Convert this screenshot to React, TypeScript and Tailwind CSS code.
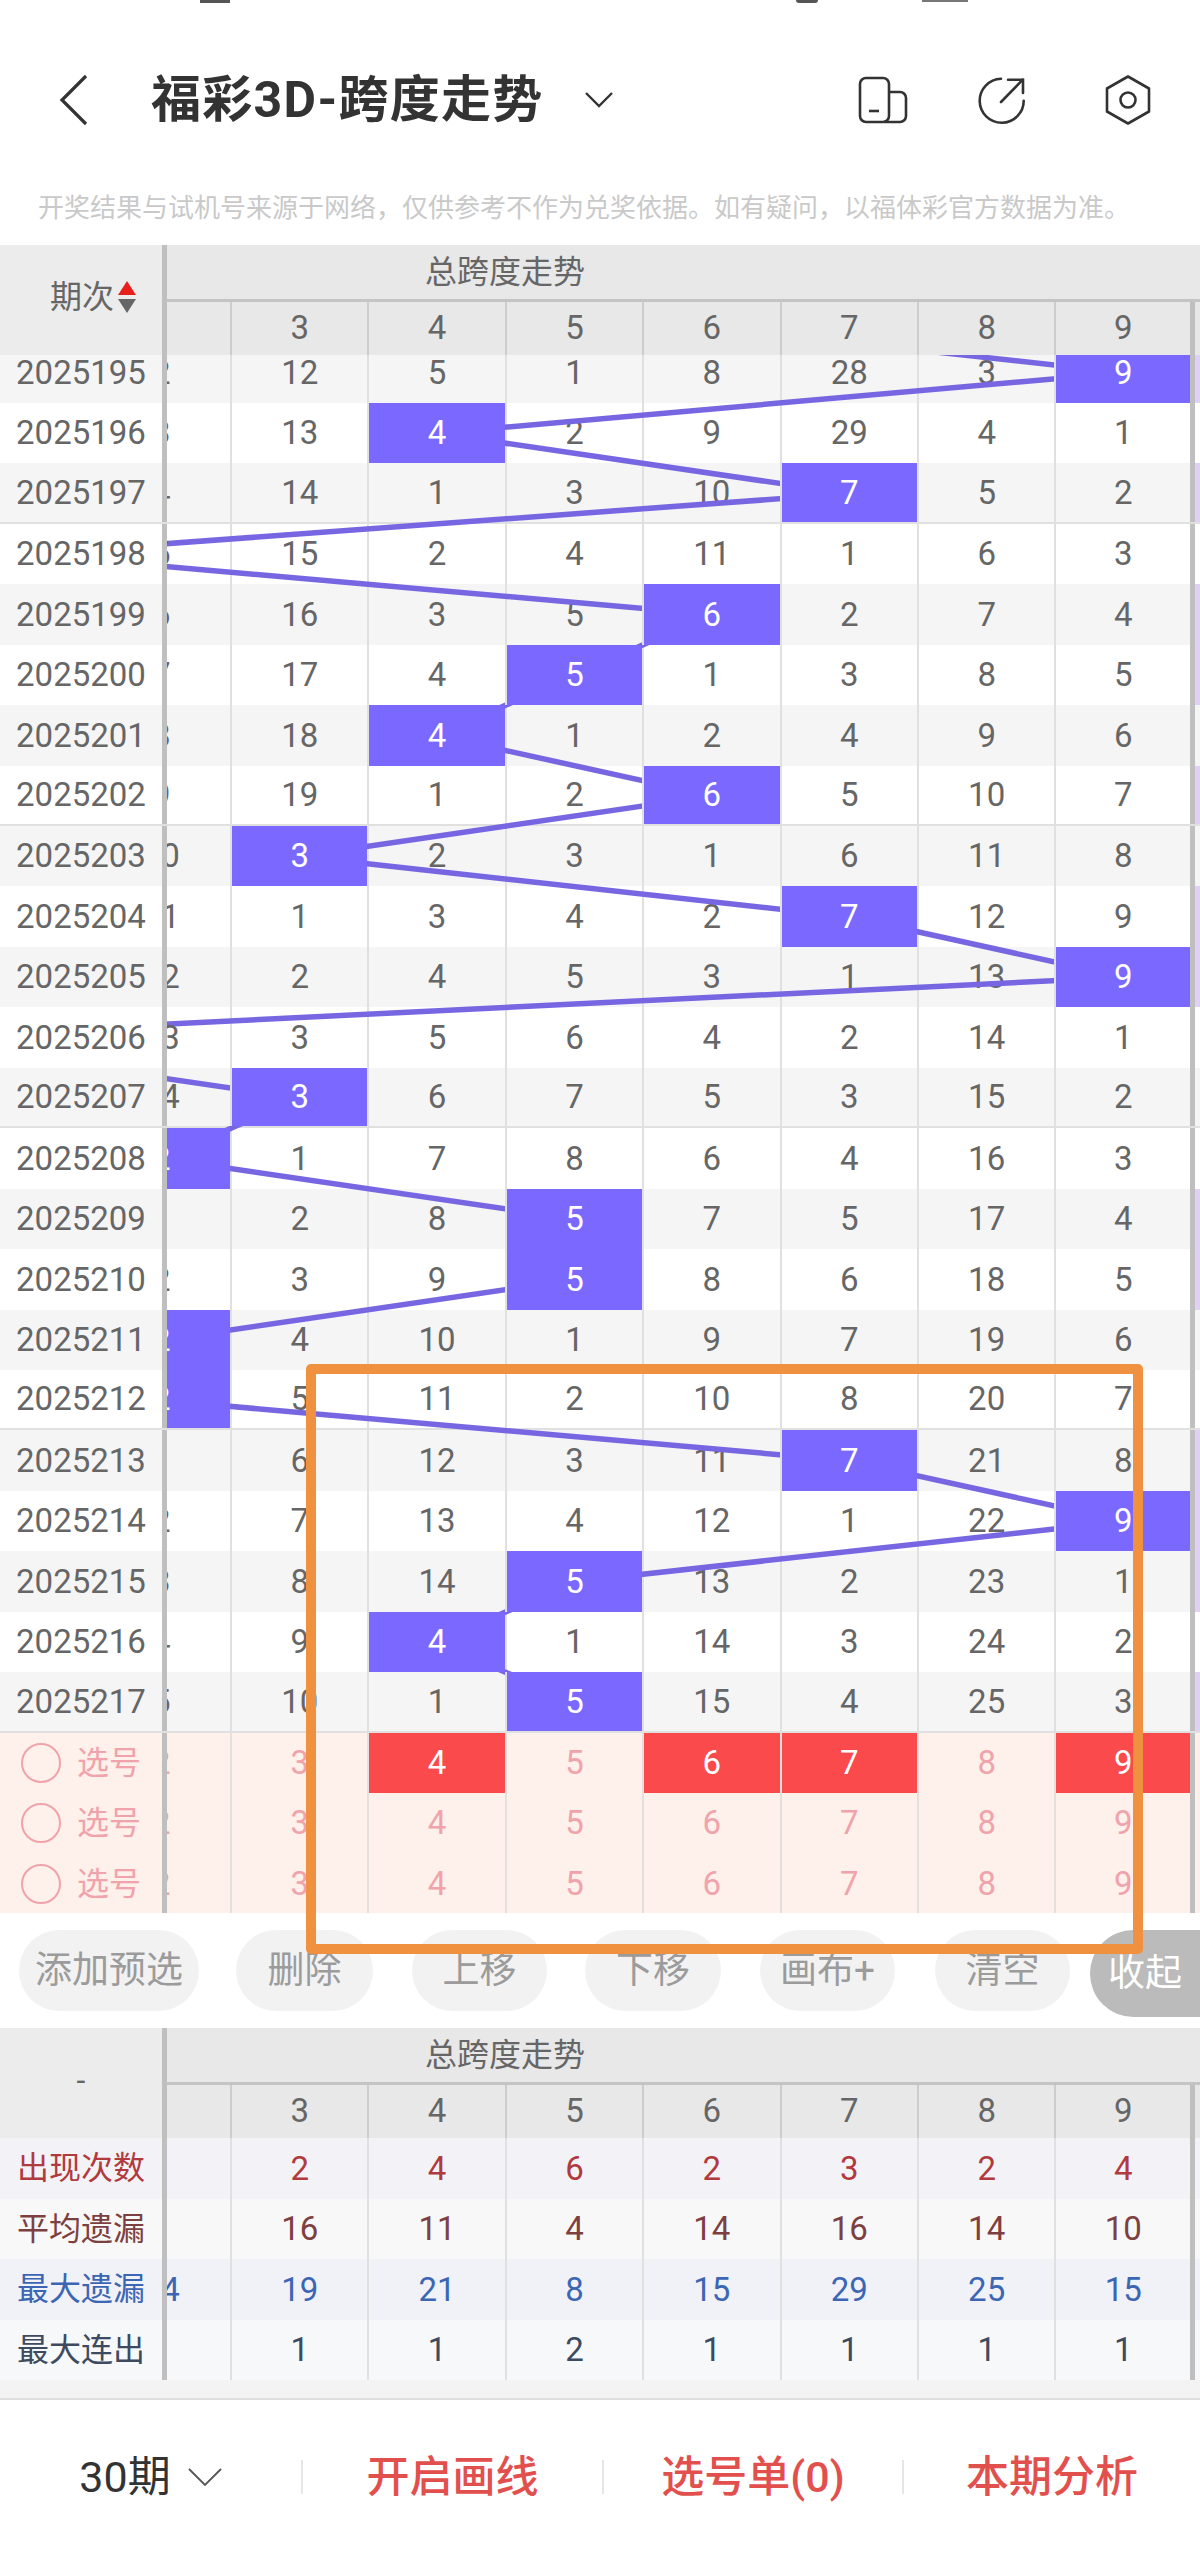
const rowH = 60.45;
const colW = 137.4;

type Row = { issue: string; tail: string; vals: number[]; ball: number; purple?: boolean };

const rows: Row[] = [
  { issue: "2025195", tail: "2", vals: [12, 5, 1, 8, 28, 3, 9], ball: 9, purple: true },
  { issue: "2025196", tail: "3", vals: [13, 4, 2, 9, 29, 4, 1], ball: 4 },
  { issue: "2025197", tail: "4", vals: [14, 1, 3, 10, 7, 5, 2], ball: 7, purple: true },
  { issue: "2025198", tail: "5", vals: [15, 2, 4, 11, 1, 6, 3], ball: 1 },
  { issue: "2025199", tail: "6", vals: [16, 3, 5, 6, 2, 7, 4], ball: 6, purple: true },
  { issue: "2025200", tail: "7", vals: [17, 4, 5, 1, 3, 8, 5], ball: 5, purple: true },
  { issue: "2025201", tail: "8", vals: [18, 4, 1, 2, 4, 9, 6], ball: 4 },
  { issue: "2025202", tail: "9", vals: [19, 1, 2, 6, 5, 10, 7], ball: 6, purple: true },
  { issue: "2025203", tail: "10", vals: [3, 2, 3, 1, 6, 11, 8], ball: 3 },
  { issue: "2025204", tail: "11", vals: [1, 3, 4, 2, 7, 12, 9], ball: 7, purple: true },
  { issue: "2025205", tail: "12", vals: [2, 4, 5, 3, 1, 13, 9], ball: 9, purple: true },
  { issue: "2025206", tail: "13", vals: [3, 5, 6, 4, 2, 14, 1], ball: 0 },
  { issue: "2025207", tail: "14", vals: [3, 6, 7, 5, 3, 15, 2], ball: 3 },
  { issue: "2025208", tail: "2", vals: [1, 7, 8, 6, 4, 16, 3], ball: 2 },
  { issue: "2025209", tail: "1", vals: [2, 8, 5, 7, 5, 17, 4], ball: 5, purple: true },
  { issue: "2025210", tail: "2", vals: [3, 9, 5, 8, 6, 18, 5], ball: 5, purple: true },
  { issue: "2025211", tail: "2", vals: [4, 10, 1, 9, 7, 19, 6], ball: 2 },
  { issue: "2025212", tail: "2", vals: [5, 11, 2, 10, 8, 20, 7], ball: 2 },
  { issue: "2025213", tail: "1", vals: [6, 12, 3, 11, 7, 21, 8], ball: 7, purple: true },
  { issue: "2025214", tail: "2", vals: [7, 13, 4, 12, 1, 22, 9], ball: 9, purple: true },
  { issue: "2025215", tail: "3", vals: [8, 14, 5, 13, 2, 23, 1], ball: 5, purple: true },
  { issue: "2025216", tail: "4", vals: [9, 4, 1, 14, 3, 24, 2], ball: 4 },
  { issue: "2025217", tail: "5", vals: [10, 1, 5, 15, 4, 25, 3], ball: 5, purple: true },
];

const cols = [3, 4, 5, 6, 7, 8, 9];
const lineX = (c: number) => 299.7 + colW * (c - 3);
const lineY = (i: number) => -12.5 + rowH * (i + 0.5);

const stats = [
  { label: "出现次数", tail: "", vals: [2, 4, 6, 2, 3, 2, 4], text: "text-[#b03a3e]", bg: "bg-[#f3f3f7]" },
  { label: "平均遗漏", tail: "", vals: [16, 11, 4, 14, 16, 14, 10], text: "text-[#7d4040]", bg: "bg-[#f8f8f8]" },
  { label: "最大遗漏", tail: "14", vals: [19, 21, 8, 15, 29, 25, 15], text: "text-[#3c66b4]", bg: "bg-[#f0f2f8]" },
  { label: "最大连出", tail: "", vals: [1, 1, 2, 1, 1, 1, 1], text: "text-[#3d4a60]", bg: "bg-[#f7f8fa]" },
];

const buttons = [
  { label: "添加预选", cls: "w-[180px] ml-[19px]" },
  { label: "删除", cls: "w-[137px] ml-[37px]" },
  { label: "上移", cls: "w-[135px] ml-[39px]" },
  { label: "下移", cls: "w-[136px] ml-[38px]" },
  { label: "画布+", cls: "w-[135px] ml-[39px]" },
  { label: "清空", cls: "w-[135px] ml-[40px]" },
];

function TableHead({ children }: { children: React.ReactNode }) {
  return (
    <div className="flex h-[110px] bg-[#e8e8e8] text-[#666]">
      <div className="flex w-[167px] shrink-0 items-center justify-center border-r-[5px] border-[#bfbfbf] bg-[#ececec] pb-[6px] text-[32px]">
        {children}
      </div>
      <div className="flex min-w-0 flex-1 flex-col">
        <div className="flex h-[57px] items-center border-b-[3px] border-[#c4c4c4] pl-[258px] text-[32px]">
          总跨度走势
        </div>
        <div className="flex flex-1">
          <div className="w-[63px] shrink-0" />
          {cols.map((c) => (
            <div
              key={c}
              className={`flex items-center justify-center border-l-2 border-[#cdcdcd] pb-[2px] text-[33px] ${
                c === 9 ? "flex-1" : "w-[137.4px] shrink-0"
              }`}
            >
              {c}
            </div>
          ))}
          <div className="w-[10px] shrink-0 border-l-[5px] border-[#bfbfbf]" />
        </div>
      </div>
    </div>
  );
}

function Tail({ value, className }: { value: string; className?: string }) {
  return (
    <div className={`relative z-20 flex w-[63px] shrink-0 overflow-hidden ${className ?? ""}`}>
      <div className="ml-[-74.4px] flex w-[137.4px] shrink-0 items-center justify-center">{value}</div>
    </div>
  );
}

function DataRow({ row, index }: { row: Row; index: number }) {
  const stripe = index % 2 === 0 ? "bg-[#f5f5f5]" : "bg-white";
  const divider = index % 5 === 2 ? "border-b-2 border-[#e0e0e0]" : "";
  return (
    <div className={`flex h-[60.45px] text-[33px] text-[#666] ${stripe} ${divider}`}>
      <div className={`relative z-30 flex w-[167px] shrink-0 items-center justify-center border-r-[5px] border-[#bfbfbf] ${stripe}`}>
        {row.issue}
      </div>
      <Tail value={row.tail} className={row.ball === 2 ? "bg-[#7b68ff] text-white" : ""} />
      {cols.map((c, i) => (
        <div
          key={c}
          className={`flex items-center justify-center border-l-2 border-[#e0e0e0] ${
            c === 9 ? "flex-1" : "w-[137.4px] shrink-0"
          } ${row.ball === c ? "relative z-20 bg-[#7b68ff] text-white" : ""}`}
        >
          {row.vals[i]}
        </div>
      ))}
      <div className={`w-[10px] shrink-0 border-l-[5px] border-[#bfbfbf] ${row.purple ? "bg-[#e0d0f6]" : ""}`} />
    </div>
  );
}

function PickRow({ hot }: { hot: number[] }) {
  return (
    <div className="flex h-[60.45px] bg-[#fef0ea] text-[33px] text-[#f0a3ab]">
      <div className="relative z-30 flex w-[167px] shrink-0 items-center border-r-[5px] border-[#bfbfbf] bg-[#fef0ea] pl-[21px]">
        <span className="h-[40px] w-[40px] rounded-full border-2 border-[#f0a3ab]" />
        <span className="ml-[16px] text-[32px]">选号</span>
      </div>
      <Tail value="2" />
      {cols.map((c) => (
        <div
          key={c}
          className={`flex items-center justify-center border-l-2 border-[#e6e0dd] ${
            c === 9 ? "flex-1" : "w-[137.4px] shrink-0"
          } ${hot.includes(c) ? "bg-[#fa4a4c] text-white" : ""}`}
        >
          {c}
        </div>
      ))}
      <div className="w-[10px] shrink-0 border-l-[5px] border-[#bfbfbf]" />
    </div>
  );
}

function TrendLines() {
  // one ball before the first visible row, it sits under the table head
  const balls = [5, ...rows.map((r) => r.ball)];
  return (
    <svg className="absolute left-0 top-0 z-10 h-[1558px] w-[1200px]" viewBox="0 0 1200 1558" fill="none">
      {balls.slice(1).map((b, i) => (
        <line
          key={i}
          x1={lineX(balls[i])}
          y1={lineY(i - 1)}
          x2={lineX(b)}
          y2={lineY(i)}
          stroke="#7766e2"
          strokeWidth="5.5"
        />
      ))}
    </svg>
  );
}

export default function App() {
  return (
    <div className="relative h-[2556px] w-[1200px] overflow-hidden bg-white font-['Roboto','Noto_Sans_CJK_SC',sans-serif]">
      <div className="flex h-[4px] items-start">
        <span className="ml-[200px] h-[3px] w-[30px] bg-[#555]" />
        <span className="ml-[566px] h-[3px] w-[22px] rounded-b-full bg-[#555]" />
        <span className="ml-[104px] h-[2px] w-[46px] bg-[#777]" />
      </div>

      <div className="flex h-[166px] items-center pl-[59px] pr-[47px] pt-[26px]">
        <svg className="h-[52px] w-[30px] shrink-0" viewBox="0 0 30 52" fill="none" stroke="#333" strokeWidth="3.2">
          <path d="M27 2 L3 26 L27 50" />
        </svg>
        <div className="ml-[62px] w-[434px] shrink-0 whitespace-nowrap text-[50px] font-bold tracking-[1.3px] text-[#333]">
          福彩3D-跨度走势
        </div>
        <svg className="h-[16px] w-[28px] shrink-0" viewBox="0 0 28 16" fill="none" stroke="#333" strokeWidth="2.4">
          <path d="M1 1 L14 14 L27 1" />
        </svg>
        <svg className="ml-auto h-[50px] w-[50px] shrink-0" viewBox="0 0 50 50" fill="none" stroke="#333" strokeWidth="2.6">
          <rect x="2" y="3" width="29" height="44" rx="6" />
          <path d="M31 17 H42 A6 6 0 0 1 48 23 V41 A6 6 0 0 1 42 47 H26" />
          <path d="M11 36 H21" />
        </svg>
        <svg className="ml-[69px] h-[50px] w-[50px] shrink-0" viewBox="0 0 50 50" fill="none" stroke="#333" strokeWidth="2.6" strokeLinecap="round">
          <path d="M24 3.8 A22 22 0 1 0 46.7 25.7" />
          <path d="M24 27 L45.7 4.7" />
          <path d="M31 4.7 H46 V18" />
        </svg>
        <svg className="ml-[76px] h-[50px] w-[50px] shrink-0" viewBox="0 0 50 50" fill="none" stroke="#333" strokeWidth="2.6" strokeLinejoin="round">
          <path d="M25 1.5 L46 13.5 V36.5 L25 48.5 L4 36.5 V13.5 Z" />
          <circle cx="25" cy="25" r="7.5" />
        </svg>
      </div>

      <div className="flex h-[75px] items-start pl-[38px] pt-[22px] text-[26px] leading-[32px] text-[#c9c9c9]">
        开奖结果与试机号来源于网络，仅供参考不作为兑奖依据。如有疑问，以福体彩官方数据为准。
      </div>

      <TableHead>
        <span className="ml-[24px]">期次</span>
        <svg className="ml-[4px] h-[32px] w-[18px]" viewBox="0 0 18 32">
          <polygon points="9,0 18,14 0,14" fill="#e8201c" />
          <polygon points="9,32 18,18 0,18" fill="#666" />
        </svg>
      </TableHead>

      <div className="relative h-[1558px] overflow-hidden">
        <TrendLines />
        <div className="mt-[-12.5px]">
          {rows.map((row, i) => (
            <DataRow key={row.issue} row={row} index={i} />
          ))}
          <PickRow hot={[4, 6, 7, 9]} />
          <PickRow hot={[]} />
          <PickRow hot={[]} />
        </div>
      </div>

      <div className="flex h-[115px] items-start pt-[17px] text-[37px]">
        {buttons.map((b) => (
          <div
            key={b.label}
            className={`flex h-[81px] shrink-0 items-center justify-center rounded-full bg-[#f2f2f3] text-[#9b9b9b] ${b.cls}`}
          >
            {b.label}
          </div>
        ))}
        <div className="ml-[20px] flex h-[87px] flex-1 items-center justify-center rounded-l-full bg-[#bbbbbb] text-white">
          收起
        </div>
      </div>

      <TableHead>-</TableHead>
      {stats.map((s) => (
        <div key={s.label} className={`flex h-[60.5px] text-[33px] ${s.bg} ${s.text}`}>
          <div className={`relative z-30 flex w-[167px] shrink-0 items-center justify-center border-r-[5px] border-[#bfbfbf] text-[32px] ${s.bg}`}>
            {s.label}
          </div>
          <Tail value={s.tail} />
          {cols.map((c, i) => (
            <div
              key={c}
              className={`flex items-center justify-center border-l-2 border-[#e0e0e0] ${
                c === 9 ? "flex-1" : "w-[137.4px] shrink-0"
              }`}
            >
              {s.vals[i]}
            </div>
          ))}
          <div className="w-[10px] shrink-0 border-l-[5px] border-[#bfbfbf]" />
        </div>
      ))}
      <div className="h-[20px] border-b-2 border-[#dedede] bg-[#f3f3f3]" />

      <div className="flex h-[156px] items-center pb-[2px] text-[43px] font-medium text-[#e2504e]">
        <div className="flex w-[301px] items-center justify-center font-normal text-[#333]">
          <span>30期</span>
          <svg className="ml-[17px] h-[18px] w-[34px]" viewBox="0 0 34 18" fill="none" stroke="#555" strokeWidth="1.8">
            <path d="M1 1 L17 17 L33 1" />
          </svg>
        </div>
        <div className="flex h-[34px] w-[301px] items-center justify-center border-l-2 border-[#e6e6e6]">开启画线</div>
        <div className="flex h-[34px] w-[300px] items-center justify-center border-l-2 border-[#e6e6e6]">选号单(0)</div>
        <div className="flex h-[34px] flex-1 items-center justify-center border-l-2 border-[#e6e6e6]">本期分析</div>
      </div>

      <div className="pointer-events-none absolute left-[306px] top-[1364px] z-40 h-[590px] w-[837px] rounded-[5px] border-[10px] border-[#f0913f]" />
    </div>
  );
}
